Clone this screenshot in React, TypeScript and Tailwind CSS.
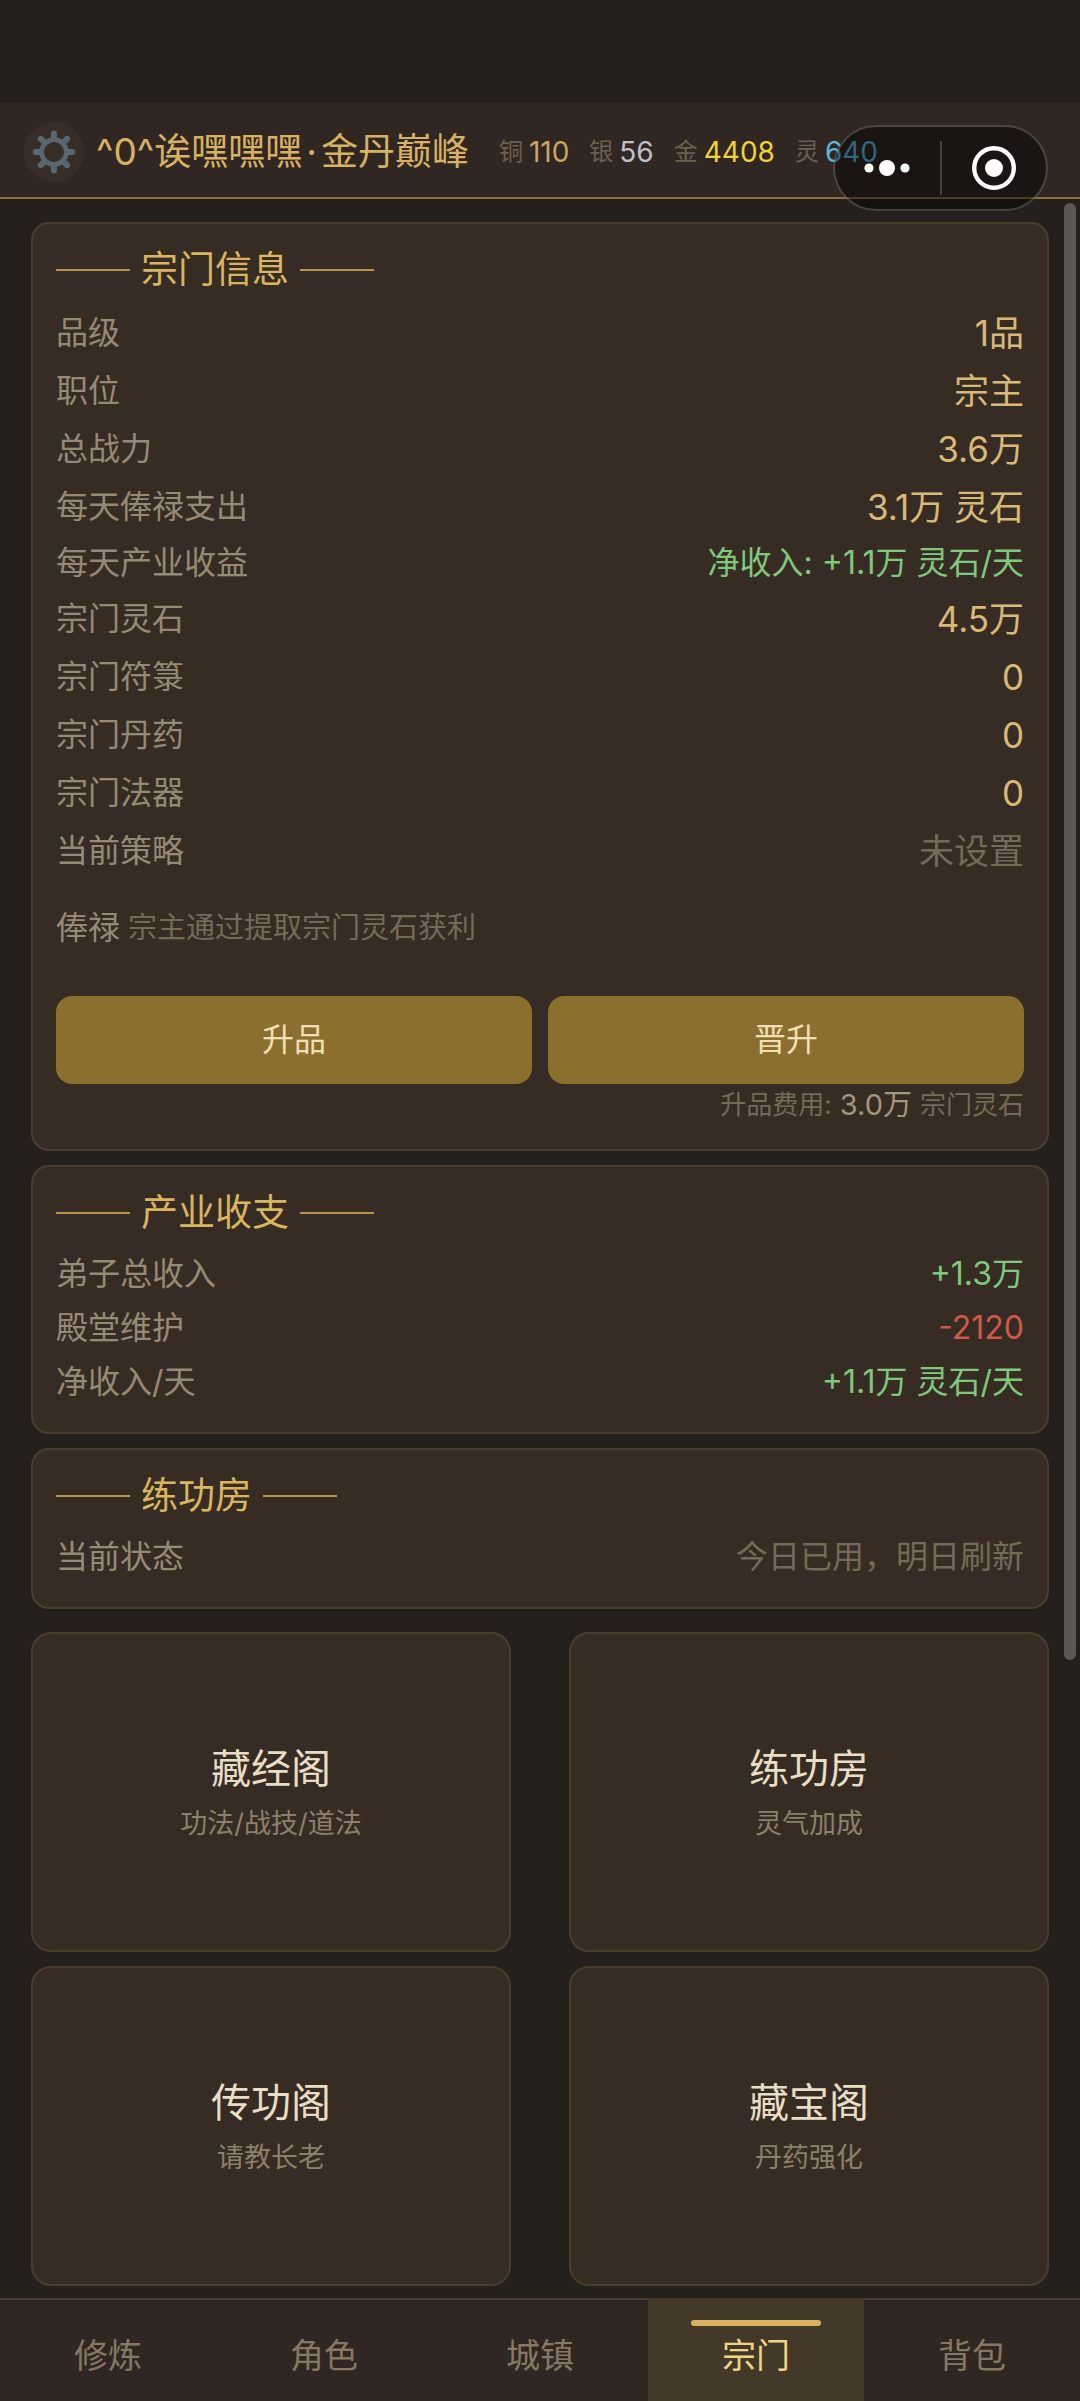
import React from 'react';
import clsx from 'clsx';

type Tone = 'gold' | 'green' | 'red' | 'muted';

interface InfoRow {
  label: string;
  value: string;
  tone: Tone;
  large?: boolean;
}

const toneClass: Record<Tone, string> = {
  gold: 'text-[#d9b878]',
  green: 'text-[#7fc87c]',
  red: 'text-[#d05a4a]',
  muted: 'text-[#756a57]',
};

const currencies = [
  { label: '铜', value: '110', color: 'text-[#c9a566]' },
  { label: '银', value: '56', color: 'text-[#c0c0c8]' },
  { label: '金', value: '4408', color: 'text-[#f0d23c]' },
  { label: '灵', value: '640', color: 'text-[#5cb8dc]' },
];

const sectRows: InfoRow[] = [
  { label: '品级', value: '1品', tone: 'gold', large: true },
  { label: '职位', value: '宗主', tone: 'gold', large: true },
  { label: '总战力', value: '3.6万', tone: 'gold', large: true },
  { label: '每天俸禄支出', value: '3.1万 灵石', tone: 'gold', large: true },
  { label: '每天产业收益', value: '净收入: +1.1万 灵石/天', tone: 'green' },
  { label: '宗门灵石', value: '4.5万', tone: 'gold', large: true },
  { label: '宗门符箓', value: '0', tone: 'gold', large: true },
  { label: '宗门丹药', value: '0', tone: 'gold', large: true },
  { label: '宗门法器', value: '0', tone: 'gold', large: true },
  { label: '当前策略', value: '未设置', tone: 'muted', large: true },
];

const industryRows: InfoRow[] = [
  { label: '弟子总收入', value: '+1.3万', tone: 'green' },
  { label: '殿堂维护', value: '-2120', tone: 'red' },
  { label: '净收入/天', value: '+1.1万 灵石/天', tone: 'green' },
];

const trainingRows: InfoRow[] = [
  { label: '当前状态', value: '今日已用，明日刷新', tone: 'muted' },
];

const halls = [
  { name: '藏经阁', desc: '功法/战技/道法' },
  { name: '练功房', desc: '灵气加成' },
  { name: '传功阁', desc: '请教长老' },
  { name: '藏宝阁', desc: '丹药强化' },
];

const tabs = ['修炼', '角色', '城镇', '宗门', '背包'];

function GearIcon() {
  return (
    <svg viewBox="0 0 44 44" className="w-11 h-11" fill="none" stroke="#586771" aria-hidden="true">
      <circle cx="22" cy="22" r="12.4" strokeWidth="4.8" />
      {[0, 45, 90, 135, 180, 225, 270, 315].map((angle) => (
        <path key={angle} d="M22 8.5V3.6" strokeWidth="6" strokeLinecap="round" transform={`rotate(${angle} 22 22)`} />
      ))}
    </svg>
  );
}

function Card({ title, rows, children }: { title: string; rows: InfoRow[]; children?: React.ReactNode }) {
  return (
    <section className="rounded-[18px] border-2 border-[#493d2e] bg-[#362c24] p-[23px]">
      <h2 className="flex items-center gap-[11px] mb-[11px] text-[37px] leading-[46px] text-[#dab560]">
        <span className="w-[74px] h-[2px] bg-[#b8954f]" />
        {title}
        <span className="w-[74px] h-[2px] bg-[#b8954f]" />
      </h2>
      <dl>
        {rows.map((row) => (
          <div key={row.label} className="flex items-center justify-between">
            <dt className="text-[32px] leading-[54px] text-[#968a76]">{row.label}</dt>
            <dd
              className={clsx(
                row.large ? 'text-[35px] leading-[58px]' : 'text-[32px] leading-[54px]',
                toneClass[row.tone]
              )}
            >
              {row.value}
            </dd>
          </div>
        ))}
      </dl>
      {children}
    </section>
  );
}

// Floating mini program controls, sits on top of the header
function Capsule() {
  return (
    <div className="absolute right-8 top-[22px] z-20 flex items-center w-[215px] h-[86px] rounded-full border-2 border-white/20 bg-black/45">
      <button type="button" aria-label="更多" className="flex-1 flex justify-center">
        <svg viewBox="0 0 46 16" className="w-[46px] h-4 fill-white">
          <circle cx="5" cy="8" r="4.6" />
          <circle cx="23" cy="8" r="8" />
          <circle cx="41" cy="8" r="4.6" />
        </svg>
      </button>
      <span className="w-[2px] h-[54px] bg-white/20" />
      <button type="button" aria-label="关闭" className="flex-1 flex justify-center">
        <svg viewBox="0 0 44 44" className="w-11 h-11">
          <circle cx="22" cy="22" r="19.8" fill="none" stroke="white" strokeWidth="4.4" />
          <circle cx="22" cy="22" r="9" fill="white" />
        </svg>
      </button>
    </div>
  );
}

export default function App() {
  return (
    <div className="relative min-h-screen flex flex-col bg-[#25201b] pt-[103px] font-['Inter','Noto_Sans_CJK_SC',sans-serif]">
      <header className="relative flex items-center h-24 pl-6 pt-[3px] border-b-2 border-[#8a6d42] bg-[#312722] whitespace-nowrap">
        <button type="button" aria-label="设置" className="flex items-center justify-center w-[60px] h-[60px] rounded-full bg-[#382d27]">
          <GearIcon />
        </button>
        <h1 className="ml-3 text-[37px] text-[#d8b264]">
          ^0^诶嘿嘿嘿<span className="mx-1">·</span>金丹巅峰
        </h1>
        <ul className="flex items-center gap-5 ml-[30px]">
          {currencies.map((item) => (
            <li key={item.label} className="flex items-center gap-[6px]">
              <span className="text-[24px] text-[#6d604e]">{item.label}</span>
              <span className={clsx('text-[28px]', item.color)}>{item.value}</span>
            </li>
          ))}
        </ul>
        <Capsule />
      </header>

      <main className="relative flex-1 px-[31px] pt-[23px] pb-3">
        {/* Scroll thumb */}
        <div className="absolute right-1 top-1 w-3 h-[1457px] rounded-full bg-[#5d5855]" />

        <div className="flex flex-col gap-[14px]">
          <Card title="宗门信息" rows={sectRows}>
            <p className="mt-[25px] flex items-center gap-2 leading-[46px]">
              <span className="text-[32px] text-[#968a76]">俸禄</span>
              <span className="text-[29px] text-[#756a57]">宗主通过提取宗门灵石获利</span>
            </p>
            <div className="mt-[45px] grid grid-cols-2 gap-4">
              <button type="button" className="h-[88px] rounded-2xl bg-[#8b6f2e] text-[32px] text-[#f0e0b4]">
                升品
              </button>
              <button type="button" className="h-[88px] rounded-2xl bg-[#8b6f2e] text-[32px] text-[#f0e0b4]">
                晋升
              </button>
            </div>
            <p className="flex items-center justify-end gap-2 text-[26px] leading-[42px] text-[#756a57]">
              升品费用: <span className="text-[29px] text-[#a3967f]">3.0万</span> 宗门灵石
            </p>
          </Card>
          <Card title="产业收支" rows={industryRows} />
          <Card title="练功房" rows={trainingRows} />
        </div>

        <div className="mt-[23px] grid grid-cols-2 gap-x-[58px] gap-y-[14px]">
          {halls.map((hall) => (
            <button
              key={hall.name}
              type="button"
              className="flex flex-col items-center justify-center h-80 pt-[3px] rounded-[20px] border-2 border-[#493d2e] bg-[#362c24]"
            >
              <span className="text-[40px] leading-[60px] text-[#e8dec6]">{hall.name}</span>
              <span className="text-[27px] leading-[50px] text-[#8d806b]">{hall.desc}</span>
            </button>
          ))}
        </div>
      </main>

      <nav className="sticky bottom-0 z-10 grid grid-cols-5 bg-[#312722]">
        {tabs.map((tab) => {
          const active = tab === '宗门';
          return (
            <a
              key={tab}
              href="#"
              aria-current={active ? 'page' : undefined}
              className={clsx(
                'relative flex items-center justify-center h-[104px] pt-2 border-t-2 text-[34px]',
                active ? 'border-[#443828] bg-[#443828] text-[#f0d388]' : 'border-[#493d2e] text-[#867862]'
              )}
            >
              {active && <span className="absolute top-5 inset-x-[20%] h-[6px] rounded-full bg-[#d9b060]" />}
              {tab}
            </a>
          );
        })}
      </nav>
    </div>
  );
}
